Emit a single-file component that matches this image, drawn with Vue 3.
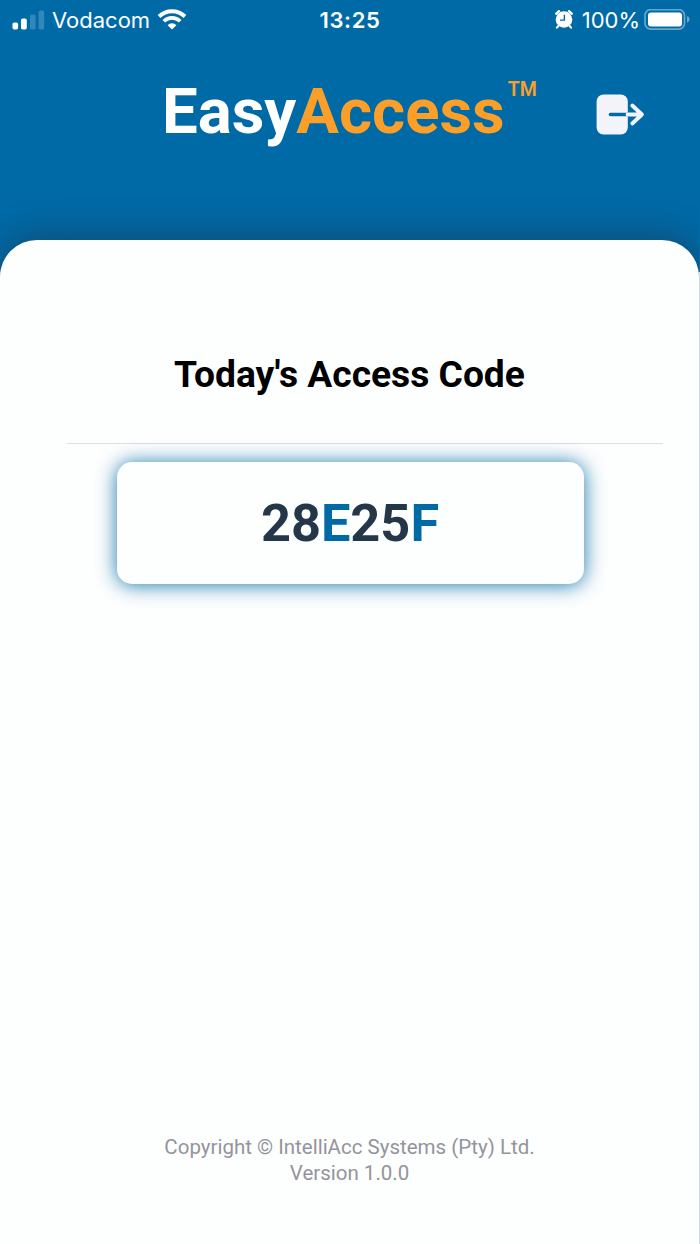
<script setup>
const code = [
  { text: '28', accent: false },
  { text: 'E', accent: true },
  { text: '25', accent: false },
  { text: 'F', accent: true },
]
</script>

<template>
  <div class="screen">
    <div class="status">
      <div class="side">
        <svg class="signal" width="32" height="21" viewBox="0 0 32 21">
          <rect x="0.5" y="12.5" width="5.6" height="7" rx="1.8" fill="#fff" />
          <rect x="9" y="8.5" width="5.8" height="11" rx="1.8" fill="#fff" />
          <rect x="18" y="4.5" width="5.6" height="15" rx="1.8" fill="#3287b9" />
          <rect x="26.6" y="0.4" width="5.6" height="19.2" rx="1.8" fill="#3287b9" />
        </svg>
        <span class="carrier">Vodacom</span>
        <svg class="wifi" width="30" height="22" viewBox="0 0 30 22" fill="none" stroke="#fff">
          <path d="M2.1 7.5a18.3 18.3 0 0 1 25.8 0" stroke-width="3.9" />
          <path d="M6.8 12.3a11.6 11.6 0 0 1 16.4 0" stroke-width="3.7" />
          <path d="M15 20.6l-4.4-4.4a6.2 6.2 0 0 1 8.8 0z" fill="#fff" stroke="none" />
        </svg>
      </div>
      <span class="time">13:25</span>
      <div class="side right">
        <svg class="alarm" width="18" height="20" viewBox="0 0 18 20">
          <g stroke="#fff" stroke-linecap="round">
            <path d="M1.3 3.7L4 1.2M16.7 3.7L14 1.2" stroke-width="2.4" />
            <path d="M3.8 15.5l-1.9 2.2M14.2 15.5l1.9 2.2" stroke-width="2" />
          </g>
          <circle cx="9" cy="9.5" r="8.3" fill="#fff" />
          <path d="M9.4 4.7v5.4H5" fill="none" stroke="#006aa7" stroke-width="1.4" />
        </svg>
        <span class="percent">100%</span>
        <svg class="battery" width="46" height="22" viewBox="0 0 46 22">
          <rect x="1" y="0.7" width="39.5" height="19.4" rx="5.6" fill="none" stroke="#66a6ca" stroke-width="1.7" />
          <rect x="4" y="3.4" width="34" height="14" rx="3" fill="#fff" />
          <path d="M43 7c3.4 1 3.4 5.6 0 6.7z" fill="#66a6ca" />
        </svg>
      </div>
    </div>

    <header class="header">
      <h1 class="brand"><span class="easy">Easy</span><span class="access">Access</span><span class="tm">TM</span></h1>
      <svg class="exit" width="50" height="42" viewBox="0 0 50 42">
        <rect x="0.6" y="0.5" width="31.2" height="40" rx="7" fill="#f3f4fa" />
        <path d="M14.5 20.5H32" stroke="#006aa7" stroke-width="3.6" stroke-linecap="round" />
        <path d="M31.6 20.5H45M36.3 11.5l9.6 9-9.6 9" fill="none" stroke="#f3f4fa" stroke-width="3.9" stroke-linecap="round" stroke-linejoin="round" />
      </svg>
    </header>

    <main class="sheet">
      <h2 class="title">Today's Access Code</h2>
      <div class="rule"></div>
      <div class="card">
        <span v-for="(part, i) in code" :key="i" :class="{ accent: part.accent }">{{ part.text }}</span>
      </div>
      <footer class="footer">
        <div class="copyright">Copyright © IntelliAcc Systems (Pty) Ltd.</div>
        <div class="version">Version 1.0.0</div>
      </footer>
    </main>
  </div>
</template>

<style>
body {
  margin: 0;
}
</style>

<style scoped>
.screen {
  width: 700px;
  height: 1244px;
  overflow: hidden;
  display: flex;
  flex-direction: column;
  background: linear-gradient(#006aa7 272px, #cbd8e5 272px);
  font-family: Roboto, sans-serif;
}
.status {
  height: 40px;
  flex: none;
  display: grid;
  grid-template-columns: 1fr auto 1fr;
  align-items: center;
  color: #fff;
  font: 400 22px/39px Inter, sans-serif;
}
.side {
  display: flex;
  align-items: center;
  padding-left: 12px;
}
.signal {
  overflow: visible;
}
.carrier {
  margin-left: 8px;
}
.wifi {
  margin-left: 7px;
}
.time {
  font-weight: 600;
  letter-spacing: 0.6px;
}
.right {
  justify-content: flex-end;
  padding: 0 10px 0 0;
}
.percent {
  margin: 0 4px 0 9px;
}
.header {
  height: 200px;
  flex: none;
  display: flex;
  align-items: flex-start;
}
.brand {
  margin: 32px 0 0 162px;
  width: 380px;
  height: 80px;
  display: flex;
  font-size: 63.5px;
  line-height: 80px;
  font-weight: 700;
}
.easy {
  color: #fff;
}
.access {
  color: #fb9f29;
}
.tm {
  margin-left: 3px;
  font-size: 19.5px;
  line-height: 36px;
  font-weight: 600;
  color: #fb9f29;
}
.exit {
  margin: 54px 0 0 54px;
}
.sheet {
  width: 699px;
  flex: 1;
  display: flex;
  flex-direction: column;
  align-items: center;
  background: #fdfefe;
  border-radius: 37px 37px 0 0;
  box-shadow: 0 0 40px rgba(30, 50, 70, 0.64);
  clip-path: inset(-60px 0 0 0);
}
.title {
  margin: 109px 0 0;
  height: 50px;
  font-size: 37.2px;
  line-height: 50px;
  font-weight: 700;
  color: #000;
  white-space: nowrap;
}
.rule {
  width: 596px;
  height: 1px;
  margin: 44px 0 0 31px;
  background: #dcdfe1;
}
.card {
  box-sizing: border-box;
  width: 467px;
  height: 122px;
  margin: 18px 0 0 2px;
  padding-right: 1px;
  display: flex;
  justify-content: center;
  border-radius: 15px;
  background: #fdfefe;
  box-shadow: 0 1px 20px rgba(0, 106, 167, 0.9);
  font-size: 52.3px;
  line-height: 122px;
  font-weight: 700;
  color: #233748;
}
.accent {
  color: #006aa7;
}
.footer {
  margin-top: 550px;
  font-size: 20.5px;
  line-height: 26px;
  text-align: center;
  color: #94949c;
}
</style>
